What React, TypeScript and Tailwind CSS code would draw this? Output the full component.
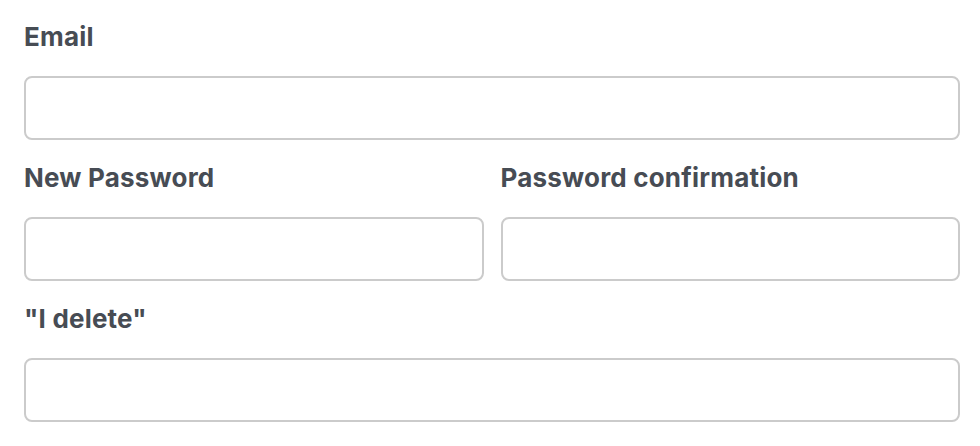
export default function App() {
  return (
    <div className="min-h-[446px] bg-white pl-6 pr-5 pt-[19px] font-['Inter',sans-serif]">
      <div className="flex flex-col gap-5">
        <Field label="Email" />
        <div className="grid grid-cols-2 gap-[17px]">
          <Field label="New Password" />
          <Field label="Password confirmation" />
        </div>
        <Field label={'"I delete"'} />
      </div>
    </div>
  )
}

function Field({ label }: { label: string }) {
  return (
    <div className="flex flex-col">
      <label className="text-[26px] leading-[36px] font-bold tracking-[0.2px] text-[#474c54] mb-[21px]">{label}</label>
      <input className="h-16 w-full rounded-lg border-2 border-[#cbcbcb] bg-white px-4 outline-none" />
    </div>
  )
}
